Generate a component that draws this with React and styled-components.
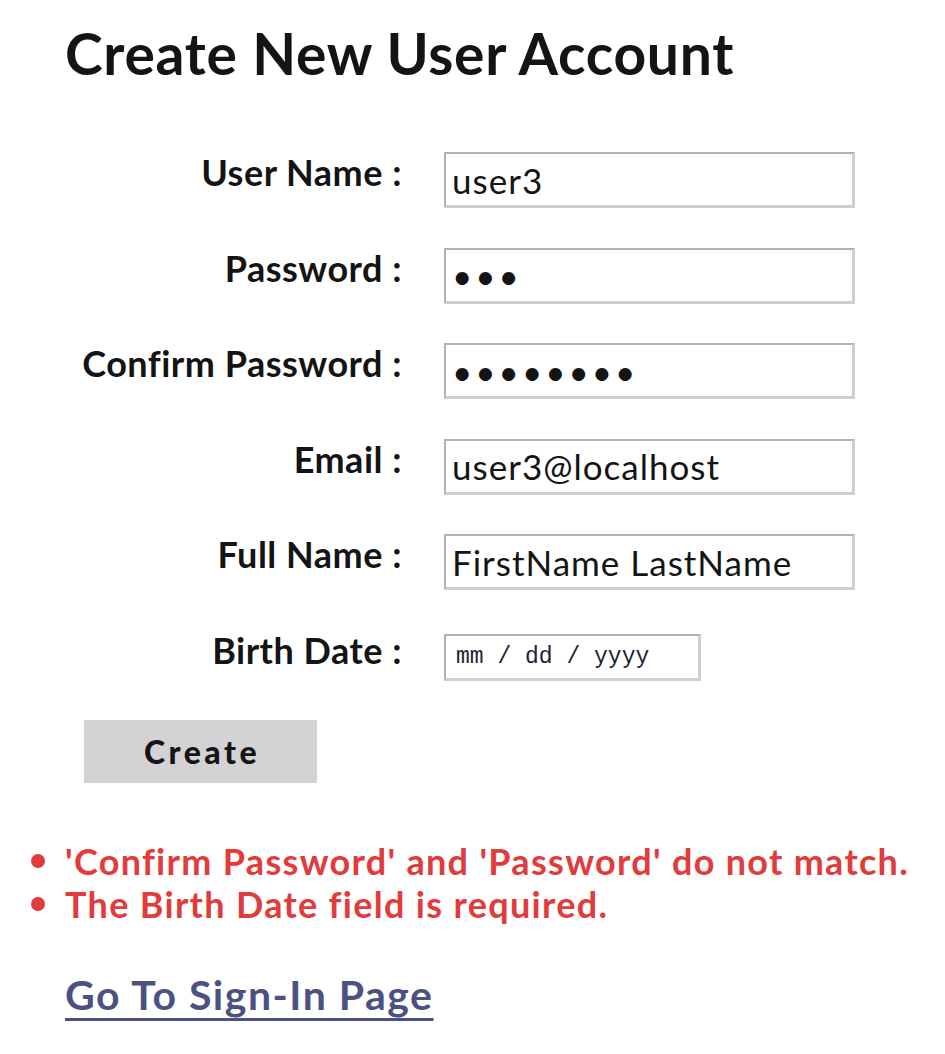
import React from "react";
import styled, { createGlobalStyle } from "styled-components";

const GlobalStyle = createGlobalStyle`
  html, body {
    margin: 0;
    padding: 0;
    background: #ffffff;
  }
  body {
    font-family: Lato, "Open Sans", sans-serif;
    color: #141414;
  }
`;

const Page = styled.div`
  width: 945px;
  height: 1054px;
  box-sizing: border-box;
  padding: 21px 0 0 65px;
  overflow: hidden;
`;

const Title = styled.h1`
  margin: 0;
  font-size: 57px;
  font-weight: 700;
  letter-spacing: 0.7px;
  line-height: 64px;
  color: #141414;
`;

const Form = styled.form`
  margin-top: 67px;
  display: grid;
  grid-template-columns: 337px 411px;
  column-gap: 42px;
  row-gap: 39.5px;
  align-items: center;
`;

const Label = styled.label`
  justify-self: end;
  font-size: 36px;
  font-weight: 700;
  letter-spacing: 0.5px;
  line-height: 40px;
  padding-bottom: 16px;
  white-space: nowrap;
`;

const Field = styled.input`
  box-sizing: border-box;
  width: 411px;
  height: 56px;
  padding: 0 6px;
  font-family: Lato, "Open Sans", sans-serif;
  font-size: 35px;
  letter-spacing: ${(p) => (p.$secret ? "3px" : "1px")};
  color: #141414;
  background: #fff;
  border-style: solid;
  border-width: 2px 3px 3px 2px;
  border-color: #b4b0b4 #cfcfcf #cfcfcf #b4b0b4;
  outline: none;
`;

const DateField = styled.div`
  box-sizing: border-box;
  width: 257px;
  height: 47px;
  display: flex;
  align-items: center;
  padding: 0 10px;
  font-family: "Liberation Mono", monospace;
  font-size: 23px;
  color: #1f2233;
  background: #fff;
  border-style: solid;
  border-width: 2px 3px 3px 2px;
  border-color: #b4b0b4 #cfcfcf #cfcfcf #b4b0b4;
  white-space: pre;
`;

const Submit = styled.button`
  display: block;
  margin: 34px 0 0 19px;
  width: 233px;
  height: 63px;
  border: none;
  background: #d4d2d4;
  font-family: Lato, "Open Sans", sans-serif;
  font-size: 32px;
  font-weight: 900;
  letter-spacing: 3.5px;
  color: #141414;
  padding: 0 0 0 3px;
`;

const ErrorList = styled.ul`
  list-style: none;
  margin: 57px 0 0 -34px;
  padding: 0;
  color: #e23b3b;
  font-size: 36px;
  font-weight: 700;
  letter-spacing: 1.3px;
  line-height: 43px;
`;

const ErrorItem = styled.li`
  display: flex;
  align-items: center;
  white-space: nowrap;

  &::before {
    content: "";
    flex: none;
    width: 14px;
    height: 14px;
    border-radius: 50%;
    background: #e23b3b;
    margin-right: 20px;
  }
`;

const SignInLink = styled.a`
  display: inline-block;
  margin-top: 44px;
  font-size: 41px;
  font-weight: 700;
  letter-spacing: 1.5px;
  color: #4b5282;
  text-decoration: underline;
  text-decoration-thickness: 3px;
  text-underline-offset: 8px;
`;

const fields = [
  { label: "User Name :", value: "user3" },
  { label: "Password :", value: "abc", type: "password" },
  { label: "Confirm Password :", value: "abcdefgh", type: "password" },
  { label: "Email :", value: "user3@localhost" },
  { label: "Full Name :", value: "FirstName LastName" },
];

const errors = [
  "'Confirm Password' and 'Password' do not match.",
  "The Birth Date field is required.",
];

export default function App() {
  return (
    <Page>
      <GlobalStyle />
      <Title>Create New User Account</Title>
      <Form onSubmit={(e) => e.preventDefault()}>
        {fields.map((f) => (
          <React.Fragment key={f.label}>
            <Label>{f.label}</Label>
            <Field
              type={f.type || "text"}
              $secret={f.type === "password"}
              defaultValue={f.value}
              readOnly
            />
          </React.Fragment>
        ))}
        <Label>Birth Date :</Label>
        <DateField>mm / dd / yyyy</DateField>
      </Form>
      <Submit type="button">Create</Submit>
      <ErrorList>
        {errors.map((msg) => (
          <ErrorItem key={msg}>{msg}</ErrorItem>
        ))}
      </ErrorList>
      <SignInLink href="#">Go To Sign-In Page</SignInLink>
    </Page>
  );
}
